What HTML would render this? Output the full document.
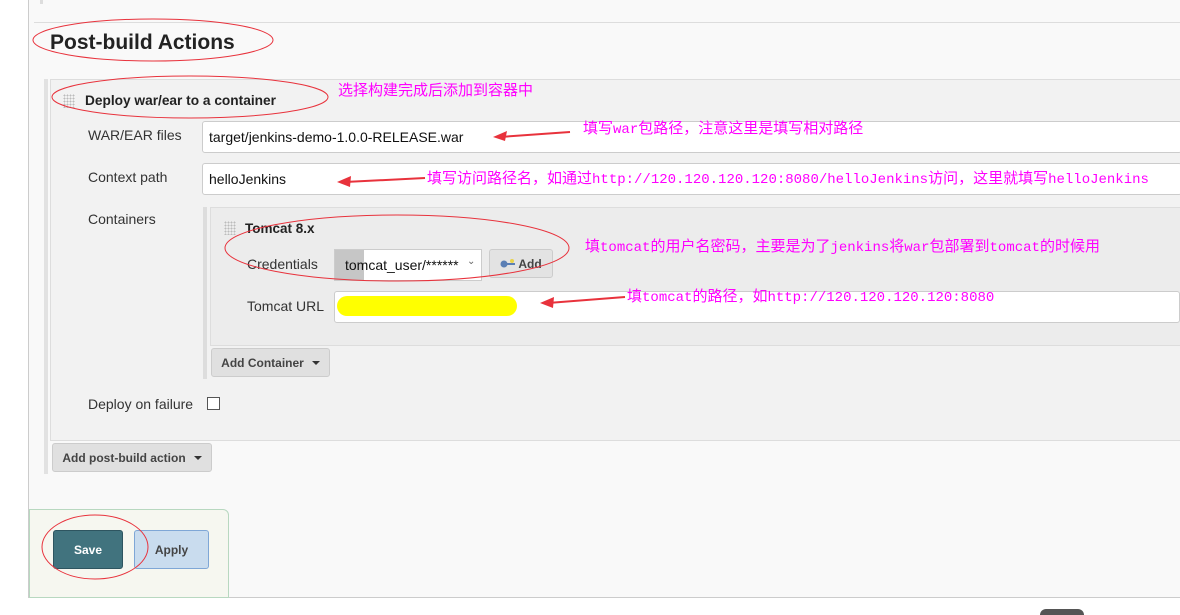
<!DOCTYPE html>
<html style="overflow:hidden;width:1180px;height:615px"><head><meta charset="utf-8"><style>
body{margin:0;width:1180px;height:615px;position:relative;overflow:hidden;background:#fff;font-family:"Liberation Sans",Arial,sans-serif;font-size:14px;color:#333}
div,span{position:absolute;box-sizing:border-box}
.lbl{font-size:14px;color:#333}
.inp{background:#fff;border:1px solid #ccc;border-radius:3px;font-size:14px;color:#111;padding:0 6px;display:flex;align-items:center}
.btn{background:#e0e0e0;border:1px solid #ccc;border-radius:3px;font-weight:bold;font-size:12px;color:#444;display:flex;align-items:center;justify-content:center}
.cn{color:#f0f;font-family:"Liberation Sans","Noto Sans CJK SC",sans-serif;font-size:15px;white-space:nowrap}
.cn b{font-weight:normal;font-family:"Liberation Mono",monospace;font-size:14px}
.grip{width:12px;height:14px;background-image:radial-gradient(#bbb 40%,transparent 41%);background-size:3px 3px}
.caret{display:inline-block;border-left:4px solid transparent;border-right:4px solid transparent;border-top:4px solid #333;margin-left:8px}
</style></head><body>
<div style="left:28px;top:0;width:1152px;height:598px;background:#f9f9f9;border-left:1px solid #ccc;border-bottom:1px solid #ccc"></div>
<div style="left:40px;top:0;width:3px;height:4px;background:#ddd"></div>
<div style="left:34px;top:22px;width:1146px;height:1px;background:#ddd"></div>
<div style="left:50px;top:31px;font-size:21px;font-weight:bold;color:#222">Post-build Actions</div>
<div style="left:44px;top:79px;width:4px;height:395px;background:#e2e2e2"></div>
<div style="left:50px;top:79px;width:1130px;height:362px;background:#f2f2f2;border:1px solid #ddd;border-right:none"></div>
<div class="grip" style="left:63px;top:94px"></div>
<div style="left:85px;top:93px;font-size:13.7px;font-weight:bold;color:#222">Deploy war/ear to a container</div>
<div class="lbl" style="left:88px;top:127px">WAR/EAR files</div>
<div class="inp" style="left:202px;top:121px;width:980px;height:32px">target/jenkins-demo-1.0.0-RELEASE.war</div>
<div class="lbl" style="left:88px;top:169px">Context path</div>
<div class="inp" style="left:202px;top:163px;width:980px;height:32px">helloJenkins</div>
<div class="lbl" style="left:88px;top:211px">Containers</div>
<div style="left:203px;top:207px;width:4px;height:172px;background:#ddd"></div>
<div style="left:210px;top:207px;width:970px;height:139px;background:#ececec;border:1px solid #ddd;border-right:none"></div>
<div class="grip" style="left:224px;top:221px"></div>
<div style="left:245px;top:221px;font-size:13.5px;font-weight:bold;color:#222">Tomcat 8.x</div>
<div class="lbl" style="left:247px;top:256px">Credentials</div>
<div style="left:334px;top:249px;width:148px;height:32px;background:#fff;border:1px solid #ccc"></div>
<div style="left:335px;top:250px;width:29px;height:30px;background:#c6c6c6"></div>
<div style="left:345px;top:257px;font-size:14px;color:#111">tomcat_user/******</div>
<div style="left:467px;top:256px;font-size:10px;color:#666">⌄</div>
<div class="btn" style="left:489px;top:249px;width:64px;height:29px;background:#e3e3e3">
<svg width="16" height="10" style="margin-right:2px"><circle cx="4" cy="5" r="3.5" fill="#5b7fb5"/><rect x="6" y="4" width="9" height="2" fill="#5b7fb5"/><circle cx="12" cy="2" r="2" fill="#e8d34a"/></svg>Add</div>
<div class="lbl" style="left:247px;top:298px">Tomcat URL</div>
<div class="inp" style="left:334px;top:291px;width:846px;height:32px"></div>
<div style="left:337px;top:296px;width:180px;height:20px;background:#ffff00;border-radius:10px"></div>
<div class="btn" style="left:211px;top:348px;width:119px;height:29px">Add Container<span class="caret" style="position:static"></span></div>
<div class="lbl" style="left:88px;top:396px">Deploy on failure</div>
<div style="left:207px;top:397px;width:13px;height:13px;border:1px solid #555;background:#fff"></div>
<div class="btn" style="left:52px;top:443px;width:160px;height:29px">Add post-build action<span class="caret" style="position:static"></span></div>
<div style="left:29px;top:509px;width:200px;height:89px;background:#f6f7f0;border:1px solid #b8d8c0;border-radius:0 6px 0 0"></div>
<div style="left:53px;top:530px;width:70px;height:39px;background:#41737e;border:1px solid #2e5560;border-radius:3px;color:#fff;font-weight:bold;font-size:12px;display:flex;align-items:center;justify-content:center">Save</div>
<div style="left:134px;top:530px;width:75px;height:39px;background:#c9dcee;border:1px solid #7fa7d6;border-radius:3px;color:#444;font-weight:bold;font-size:12px;display:flex;align-items:center;justify-content:center">Apply</div>
<div style="left:1040px;top:609px;width:44px;height:6px;border-radius:22px 22px 0 0;background:#555"></div>
<div class="cn" style="left:338px;top:79px">选择构建完成后添加到容器中</div>
<div class="cn" style="left:583px;top:117px">填写<b>war</b>包路径，注意这里是填写相对路径</div>
<div class="cn" style="left:427px;top:167px">填写访问路径名，如通过<b>http://120.120.120.120:8080/helloJenkins</b>访问，这里就填写<b>helloJenkins</b></div>
<div class="cn" style="left:585px;top:235px">填<b>tomcat</b>的用户名密码，主要是为了<b>jenkins</b>将<b>war</b>包部署到<b>tomcat</b>的时候用</div>
<div class="cn" style="left:627px;top:285px">填<b>tomcat</b>的路径，如<b>http://120.120.120.120:8080</b></div>
<svg width="1180" height="615" style="position:absolute;left:0;top:0" fill="none" stroke="#e8323c" stroke-width="1">
<ellipse cx="153" cy="40" rx="120" ry="21"/>
<ellipse cx="190" cy="97" rx="138" ry="21"/>
<ellipse cx="397" cy="248" rx="172" ry="33"/>
<ellipse cx="95" cy="547" rx="53" ry="32"/>
<g stroke-width="2"><path d="M500 137 L570 132"/><path d="M345 182 L425 178"/><path d="M548 303 L625 297"/></g>
<g fill="#e8323c" stroke="none"><path d="M493 137 L507 131 L505 141Z"/><path d="M337 182 L351 176 L350 187Z"/><path d="M540 303 L554 297 L553 308Z"/></g>
</svg>
</body></html>
